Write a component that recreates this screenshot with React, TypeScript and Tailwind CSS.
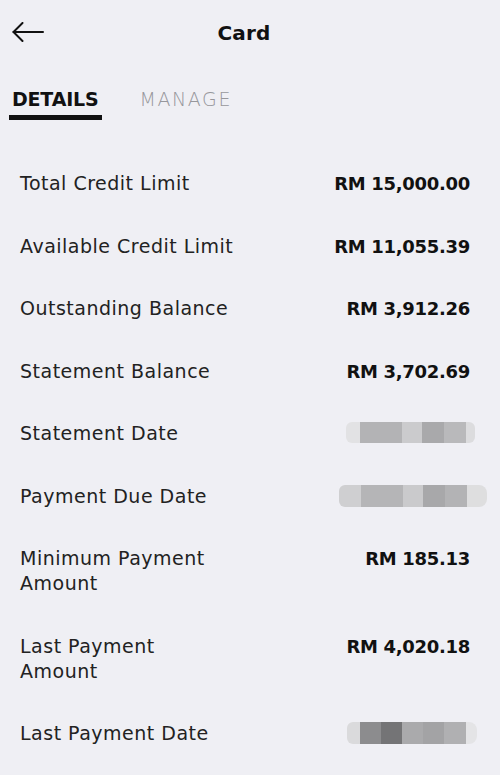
import React from "react";

const rows: { label: string[]; value?: string; blur?: "a" | "b" | "c" }[] = [
  { label: ["Total Credit Limit"], value: "RM 15,000.00" },
  { label: ["Available Credit Limit"], value: "RM 11,055.39" },
  { label: ["Outstanding Balance"], value: "RM 3,912.26" },
  { label: ["Statement Balance"], value: "RM 3,702.69" },
  { label: ["Statement Date"], blur: "a" },
  { label: ["Payment Due Date"], blur: "b" },
  { label: ["Minimum Payment", "Amount"], value: "RM 185.13" },
  { label: ["Last Payment", "Amount"], value: "RM 4,020.18" },
  { label: ["Last Payment Date"], blur: "c" },
];

function Blur({ kind }: { kind: "a" | "b" | "c" }) {
  if (kind === "a") {
    return (
      <div className="flex h-[21px] items-stretch mr-[-5px] blur-[0.6px]">
        <div className="w-[14px] bg-[#e2e2e4] rounded-l-md" />
        <div className="w-[42px] bg-[#b3b3b5]" />
        <div className="w-[20px] bg-[#cbcbcd]" />
        <div className="w-[22px] bg-[#a9a9ab]" />
        <div className="w-[22px] bg-[#b9b9bb]" />
        <div className="w-[9px] bg-[#dcdcde] rounded-r-md" />
      </div>
    );
  }
  if (kind === "b") {
    return (
      <div className="flex h-[22px] items-stretch mr-[-17px] blur-[0.6px]">
        <div className="w-[22px] bg-[#cfcfd1] rounded-l-md" />
        <div className="w-[42px] bg-[#b5b5b7]" />
        <div className="w-[20px] bg-[#cacacc]" />
        <div className="w-[22px] bg-[#a8a8aa]" />
        <div className="w-[22px] bg-[#b3b3b5]" />
        <div className="w-[20px] bg-[#dededf] rounded-r-lg" />
      </div>
    );
  }
  return (
    <div className="flex h-[22px] items-stretch mr-[-7px] blur-[0.6px]">
      <div className="w-[13px] bg-[#dadadc] rounded-l-md" />
      <div className="w-[21px] bg-[#8c8c8e]" />
      <div className="w-[21px] bg-[#747476]" />
      <div className="w-[21px] bg-[#aaaaac]" />
      <div className="w-[21px] bg-[#a3a3a5]" />
      <div className="w-[22px] bg-[#b0b0b2]" />
      <div className="w-[11px] bg-[#e4e4e6] rounded-r-lg" />
    </div>
  );
}

export default function App() {
  return (
    <div
      className="w-[500px] h-[775px] bg-[#efeff4] text-[#1a1a1a] overflow-hidden"
      style={{ fontFamily: '"DejaVu Sans", "Noto Sans", sans-serif' }}
    >
      <div className="relative flex h-[64px] items-center justify-center">
        <svg
          className="absolute left-[12px] top-[22px]"
          width="32"
          height="20"
          viewBox="0 0 32 20"
          fill="none"
          stroke="#111"
          strokeWidth="2"
          strokeLinecap="round"
          strokeLinejoin="round"
        >
          <path d="M31 10H1.5" />
          <path d="M10.5 1L1.5 10l9 9" />
        </svg>
        <div className="mr-[12px] text-[20px] font-bold tracking-[0.2px] mt-[1px] text-[#111]">Card</div>
      </div>
      <div className="flex items-start pl-[8px] pt-[21px]">
        <div className="flex flex-col items-center">
          <div className="px-[4px] text-[19px] font-semibold text-[#111] leading-[28px] tracking-[-0.2px]">
            DETAILS
          </div>
          <div className="mt-[2px] h-[5px] w-[93px] bg-[#111]" />
        </div>
        <div className="ml-[37px] text-[19px] font-light text-[#97979c] leading-[28px] tracking-[1.6px]">
          MANAGE
        </div>
      </div>
      <div className="flex flex-col gap-[37.5px] pl-[20px] pr-[30px] pt-[51px]">
        {rows.map((r, i) => (
          <div key={i} className="flex items-start justify-between">
            <div className="text-[19px] leading-[25px] text-[#222] tracking-[0.5px]">
              {r.label.map((l, j) => (
                <div key={j}>{l}</div>
              ))}
            </div>
            {r.value ? (
              <div className="text-[18px] leading-[25px] font-bold text-[#111] tracking-[-0.3px]">
                {r.value}
              </div>
            ) : (
              <div className="pt-[1px]">
                <Blur kind={r.blur!} />
              </div>
            )}
          </div>
        ))}
      </div>
    </div>
  );
}
